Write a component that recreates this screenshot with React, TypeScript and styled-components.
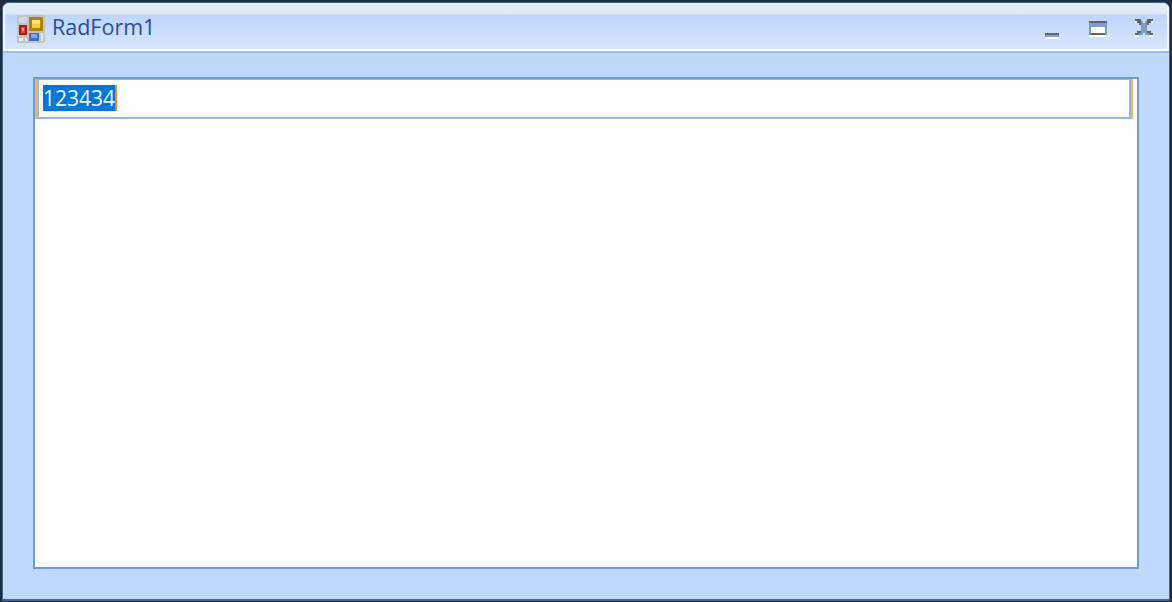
import React from "react"
import styled, { createGlobalStyle } from "styled-components"

const GlobalStyle = createGlobalStyle`
  html, body {
    margin: 0;
    padding: 0;
    background: #1f2c3c;
  }
`

const Window = styled.div`
  box-sizing: border-box;
  width: 1172px;
  height: 602px;
  border-style: solid;
  border-color: #1f2c3c;
  border-width: 2px 2px 1px 2px;
  font-family: "Open Sans", "Noto Sans", sans-serif;
`

const Frame = styled.div`
  box-sizing: border-box;
  height: 100%;
  display: flex;
  flex-direction: column;
  overflow: hidden;
  border-style: solid;
  border-color: #3f6596;
  border-width: 1px 1px 2px 1px;
  border-radius: 7px 7px 0 0;
  background: #bfd9fd;
`

const TitleBar = styled.div`
  box-sizing: border-box;
  height: 48px;
  flex: none;
  display: flex;
  align-items: flex-start;
  padding: 12px 14px 0 12px;
  border-left: 2px solid #f4f8fe;
  border-right: 2px solid #f4f8fe;
  border-bottom: 2px solid #ffffff;
  box-shadow: 0 2px 0 #9cbeee;
  background: linear-gradient(
    to bottom,
    #e3edfd 0,
    #dce9fd 11px,
    #bdd6fc 12px,
    #d6e6fd 100%
  );
`

const AppIcon = styled.svg`
  width: 28px;
  height: 28px;
  flex: none;
  shape-rendering: crispEdges;
`

const Title = styled.span`
  margin: -1px 0 0 7px;
  flex: 1;
  font-size: 21.5px;
  line-height: 26px;
  color: #2b4b9f;
`

const Controls = styled.div`
  display: flex;
  align-items: flex-start;
  margin-top: 4px;
`

const ControlIcon = styled.svg<{ $gap: number; $top?: number }>`
  display: block;
  flex: none;
  margin-left: ${(p) => p.$gap}px;
  margin-top: ${(p) => p.$top ?? 0}px;
  shape-rendering: crispEdges;
`

const Content = styled.div`
  flex: 1;
  min-height: 0;
  display: flex;
  padding: 26px 30px 30px;
`

const Panel = styled.div`
  box-sizing: border-box;
  flex: 1;
  border: 2px solid #6c9bd6;
  background: #ffffff;
  padding-right: 4px;
`

const InputFrame = styled.div`
  border-left: 2px solid #fcb454;
  border-right: 2px solid #fcb454;
`

const InputBox = styled.div`
  box-sizing: border-box;
  height: 40px;
  padding: 5px 0 0 4px;
  display: flex;
  align-items: flex-start;
  border: 2px solid #93b7e8;
  border-top-width: 1px;
  background: #ffffff;
`

const Selection = styled.span`
  display: block;
  width: 72px;
  height: 26px;
  font-size: 21px;
  line-height: 26px;
  white-space: nowrap;
  overflow: hidden;
  color: #f2f8ff;
  background: #0078d7;
`

const Caret = styled.span`
  display: block;
  width: 2px;
  height: 26px;
  background: #f08a24;
`

const App = () => (
  <Window>
    <GlobalStyle />
    <Frame>
      <TitleBar>
        <AppIcon viewBox="0 0 28 28">
          <rect width="28" height="28" fill="#c3c3c0" />
          <rect x="2" y="2" width="8" height="6" fill="#c6daf6" />
          <rect x="12" y="2" width="14" height="14" fill="#a8850f" />
          <rect x="15" y="5" width="8" height="8" fill="#fbc63c" />
          <rect x="15" y="5" width="8" height="4" fill="#ffe07c" />
          <rect x="2" y="10" width="8" height="10" fill="#a81c10" />
          <rect x="4" y="12" width="4" height="6" fill="#d9483e" />
          <rect x="5" y="13" width="2" height="3" fill="#f0a09a" />
          <rect x="12" y="18" width="10" height="8" fill="#3f6fc0" />
          <rect x="14" y="19" width="6" height="4" fill="#7ea8e4" />
          <rect x="2" y="23" width="4" height="3" fill="#dfeafa" />
          <rect x="8" y="23" width="2" height="3" fill="#dfeafa" />
          <rect x="24" y="18" width="2" height="8" fill="#dfeafa" />
        </AppIcon>
        <Title>RadForm1</Title>
        <Controls>
          <ControlIcon $gap={0} width="14" height="20" viewBox="0 0 14 20">
            <rect y="14" width="14" height="2" fill="#5f6670" />
            <rect y="16" width="14" height="2" fill="#84a3cf" />
            <rect y="18" width="14" height="2" fill="#ffffff" />
          </ControlIcon>
          <ControlIcon $gap={30} $top={2} width="18" height="16" viewBox="0 0 18 16">
            <rect width="18" height="2" fill="#5f6670" />
            <rect y="2" width="18" height="12" fill="#7f9cc6" />
            <rect x="2" y="6" width="14" height="6" fill="#ffffff" />
            <rect x="2" y="12" width="14" height="2" fill="#5f6670" />
            <rect y="14" width="18" height="2" fill="#ffffff" />
          </ControlIcon>
          <ControlIcon $gap={28} width="18" height="18" viewBox="0 0 18 18">
            <path
              d="M6 2h2v2H6zM10 2h2v2h-2zM6 4h6v10H6zM4 14h4v2H4zM10 14h4v2h-4z"
              fill="#7f9cc0"
            />
            <path
              d="M0 0h6v2H0zM12 0h6v2h-6zM2 2h4v2H2zM12 2h4v2h-4zM4 4h2v2H4zM12 4h2v2h-2zM2 12h4v2H2zM12 12h4v2h-4zM0 14h4v2H0zM14 14h4v2h-4z"
              fill="#5f6670"
            />
            <path
              d="M0 2h2v2H0zM16 2h2v2h-2zM0 16h4v2H0zM14 16h4v2h-4z"
              fill="#ffffff"
            />
          </ControlIcon>
        </Controls>
      </TitleBar>
      <Content>
        <Panel>
          <InputFrame>
            <InputBox>
              <Selection>123434</Selection>
              <Caret />
            </InputBox>
          </InputFrame>
        </Panel>
      </Content>
    </Frame>
  </Window>
)

export default App
